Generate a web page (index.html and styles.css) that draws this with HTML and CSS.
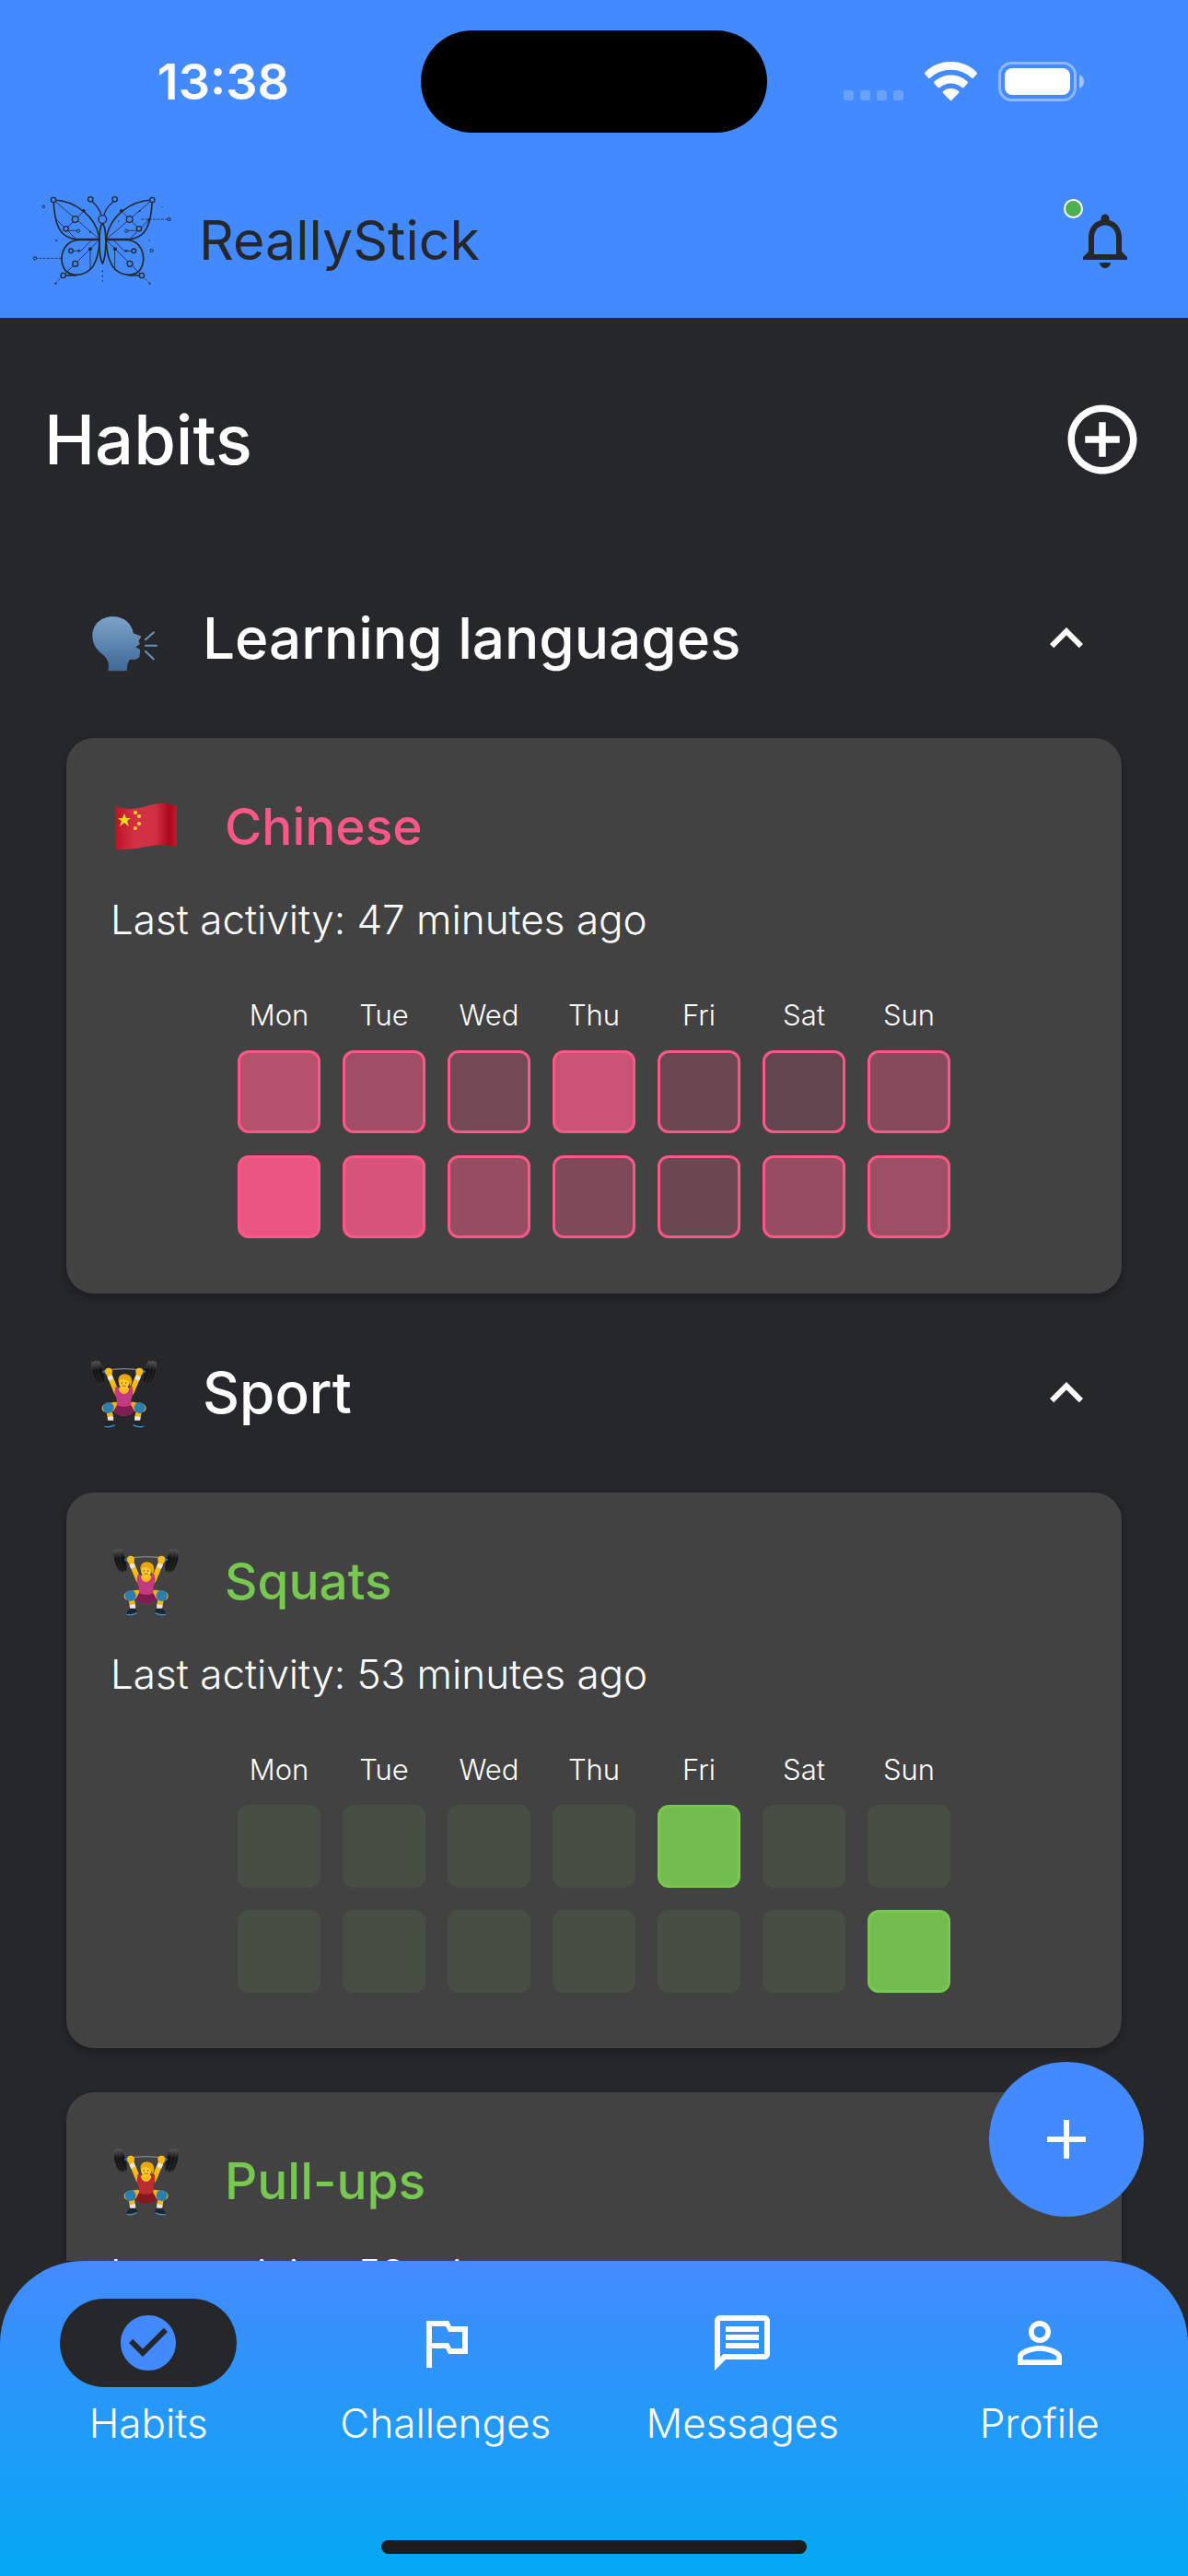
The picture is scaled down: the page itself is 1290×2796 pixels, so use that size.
FILE: index.html
```html
<!DOCTYPE html>
<html lang="en">
<head>
<meta charset="utf-8">
<meta name="viewport" content="width=device-width">
<title>ReallyStick</title>
<link rel="stylesheet" href="styles.css">
</head>
<body>
<svg class="sprite" aria-hidden="true">
  <defs>
    <linearGradient id="head-fill" x1="0" y1="0" x2="0" y2="1"><stop offset="0" stop-color="#7ba3c9"/><stop offset="1" stop-color="#3f6897"/></linearGradient>
    <linearGradient id="flag-fill" x1="0" y1="0" x2="1" y2="0"><stop offset="0" stop-color="#bd1226"/><stop offset=".3" stop-color="#d23143"/><stop offset=".65" stop-color="#d23143"/><stop offset=".88" stop-color="#a9091b"/><stop offset="1" stop-color="#c01a2d"/></linearGradient>
    <linearGradient id="plate-fill" x1="0" y1="0" x2="0" y2="1"><stop offset="0" stop-color="#5c5c5c"/><stop offset=".4" stop-color="#121212"/><stop offset="1" stop-color="#1c1c1c"/></linearGradient>
    <linearGradient id="skin-fill" gradientUnits="userSpaceOnUse" x1="0" y1="60" x2="0" y2="140"><stop offset="0" stop-color="#ffd02e"/><stop offset="1" stop-color="#f5a80d"/></linearGradient>
  </defs>
  <symbol id="lifter" viewBox="36 24 216 225">
    <g stroke="#4c4c4c" stroke-width="1" fill="url(#plate-fill)">
      <ellipse cx="53" cy="68" rx="10" ry="37" transform="rotate(-14 53 68)"/>
      <ellipse cx="62" cy="68" rx="10" ry="40" transform="rotate(-14 62 68)"/>
      <ellipse cx="71" cy="67" rx="9" ry="38" transform="rotate(-14 71 67)"/>
      <ellipse cx="239" cy="68" rx="10" ry="37" transform="rotate(14 239 68)"/>
      <ellipse cx="230" cy="68" rx="10" ry="40" transform="rotate(14 230 68)"/>
      <ellipse cx="220" cy="67" rx="9" ry="38" transform="rotate(14 220 67)"/>
    </g>
    <path d="M76 67l14-5M202 62l14 5" stroke="#2f6bb5" stroke-width="8"/>
    <path d="M90 61Q146 51 204 61" fill="none" stroke="#8a8583" stroke-width="4"/>
    <path d="M96 70L121 132M196 70L171 132" stroke="url(#skin-fill)" stroke-width="17" stroke-linecap="round"/>
    <path d="M98 80l6 12M194 80l-6 12" stroke="#e4e6f2" stroke-width="16"/>
    <circle cx="96" cy="65" r="12" fill="#fbb91a"/><circle cx="196" cy="65" r="12" fill="#fbb91a"/>
    <path d="M118 125q28-22 56 0l-8 28h-40z" fill="#fbb91a"/>
    <path d="M118 178l-30 6M174 178l30 6" stroke="#f9b018" stroke-width="28" stroke-linecap="round"/>
    <path d="M97 190l6 30M195 190l-6 30" stroke="#f9b418" stroke-width="19"/>
    <circle cx="95" cy="183" r="18" fill="#2b7fae"/><circle cx="197" cy="183" r="18" fill="#2b7fae"/>
    <path d="M101 212l2 14M191 212l-2 14" stroke="#e9e9f3" stroke-width="18"/>
    <path d="M94 224h18l6 12-8 9H82q0-12 12-21zM198 224h-18l-6 12 8 9h28q0-12-12-21z" fill="#20242b"/>
    <path d="M82 244q20 4 34-5M210 244q-20 4-34-5" stroke="#3d8dc4" stroke-width="4" fill="none"/>
    <path d="M119 114h9q2 24 18 24t18-24h9q5 24-3 40l-1 20 11 20-15 12q-19 6-38 0l-15-12 11-20-1-20q-10-16-3-40z" fill="var(--suit)"/>
    <path d="M123 175q23 10 46 0l11 19-15 12q-19 6-38 0l-15-12z" fill="var(--suit-dark)"/>
    <ellipse cx="146" cy="100" rx="17" ry="23" fill="#ffc72c"/>
    <path d="M127 100q-2-26 21-27 24 1 24 25-1 12-8 17 2-22-18-25-14 0-19 10z" fill="#eaa70b"/>
    <circle cx="139" cy="102" r="2" fill="#5b3a12"/><circle cx="152" cy="102" r="2" fill="#5b3a12"/>
    <path d="M140 113q6-4 12 0" stroke="#8b4a16" stroke-width="2.500" fill="none"/>
  </symbol>
  <symbol id="chevron" viewBox="0 0 24 24"><path d="M12 8l-6 6 1.410 1.410L12 10.830l4.590 4.580L18 14z"/></symbol>
</svg>

<header class="top">
  <div class="status">
    <span class="status-time">13:38</span>
    <span class="island"></span>
    <svg class="status-icons" viewBox="0 0 261 44" aria-hidden="true">
      <g fill="#fff" opacity=".2"><rect y="31" width="11" height="11" rx="3"/><rect x="18" y="31" width="11" height="11" rx="3"/><rect x="36" y="31" width="11" height="11" rx="3"/><rect x="54" y="31" width="11" height="11" rx="3"/></g>
      <path fill="#fff" d="M116.500 0c11 0 21 4 28 11.500q1 1 0 2l-3.500 4q-1 1-2 0a33 33 0 0 0-45 0q-1 1-2 0l-3.500-4q-1-1 0-2A40 40 0 0 1 116.500 0zM116.500 14.500c7 0 13 2.500 18 7q1 1 0 2l-4 4.500q-1 .5-2 0a18 18 0 0 0-24 0q-1 .5-2 0l-4-4.500q-1-1 0-2 8-7 18-7zM116.500 29q5 0 8.500 3 .8 1 0 2l-8.500 8.500-8.500-8.500q-.8-1 0-2 3.500-3 8.500-3z"/>
      <rect x="169.500" y="1.500" width="82" height="40" rx="13" fill="none" stroke="#fff" stroke-opacity=".4" stroke-width="3"/>
      <rect x="175" y="7" width="71" height="29" rx="8" fill="#fff"/>
      <path d="M256 14q5 2 5 7.500t-5 7.500z" fill="#fff" opacity=".5"/>
    </svg>
  </div>
  <div class="appbar">
    <svg class="logo" viewBox="0 12 540 375" aria-hidden="true">
      <g fill="none" stroke="#26272b" stroke-width="5" stroke-linejoin="round">
        <path d="M114 66C185 68 255 120 264 194H188C135 188 118 150 114 66z"/>
        <path d="M436 66C365 68 295 120 286 194H362C415 188 432 150 436 66z"/>
        <path d="M264 196H195C150 200 140 240 141 262C144 292 158 310 190 310C235 308 262 272 264 196z"/>
        <path d="M286 196H355C400 200 408 240 407 262C404 292 390 310 358 310C313 308 288 272 286 196z"/>
        <path d="M274 142C259 158 261 250 274 273C287 250 289 158 274 142z"/>
        <path d="M269 115C266 95 252 82 239 70M279 115C282 95 298 82 310 70" stroke-width="4"/>
        <path d="M146 312h44M402 312h-44" stroke-width="4"/>
      </g>
      <g fill="none" stroke="#26272b" stroke-width="2.500">
        <path d="M114 66L264 194M436 66L286 194M155 160L213 102M393 160L335 102M122 128L188 194M428 128L362 194M155 166h40M393 166h-40"/>
        <path d="M264 196L146 312M286 196L402 312M240 196L203 232H172M308 196L345 232H376M234 226V290M314 226V290M155 296L175 310M395 296L375 310"/>
        <path d="M54 256H140M400 129H491M120 338L146 312M428 338L402 312" stroke-dasharray="9 4"/>
        <path d="M274 298v48" stroke-width="5" stroke-linecap="round" stroke-dasharray="0 16"/>
      </g>
      <g fill="#448aff" stroke="#26272b" stroke-width="4">
        <circle cx="114" cy="66" r="8"/><circle cx="436" cy="66" r="8"/><circle cx="235" cy="64" r="8"/><circle cx="314" cy="64" r="8"/>
        <circle cx="274" cy="129" r="13"/><circle cx="185" cy="129" r="10"/><circle cx="362" cy="129" r="10"/>
        <circle cx="155" cy="160" r="8"/><circle cx="393" cy="160" r="8"/><circle cx="171" cy="232" r="7"/><circle cx="376" cy="232" r="7"/>
        <circle cx="185" cy="274" r="9"/><circle cx="363" cy="274" r="9"/><circle cx="146" cy="312" r="8"/><circle cx="402" cy="312" r="8"/>
        <g stroke-width="3"><circle cx="195" cy="167" r="5"/><circle cx="352" cy="167" r="5"/><circle cx="54" cy="256" r="5"/><circle cx="491" cy="129" r="5"/><circle cx="434" cy="231" r="5"/><circle cx="82" cy="88" r="4"/></g>
      </g>
      <g fill="#26272b"><circle cx="213" cy="101" r="5"/><circle cx="335" cy="101" r="5"/><circle cx="234" cy="226" r="6"/><circle cx="315" cy="226" r="6"/><circle cx="197" cy="232" r="4"/><circle cx="351" cy="232" r="4"/><circle cx="234" cy="170" r="3"/><circle cx="395" cy="102" r="3"/><circle cx="425" cy="131" r="4"/><circle cx="124" cy="198" r="3"/><circle cx="427" cy="198" r="2"/><circle cx="468" cy="88" r="2"/><circle cx="326" cy="135" r="2"/><circle cx="82" cy="112" r="1"/><circle cx="121" cy="338" r="3"/><circle cx="428" cy="338" r="3"/></g>
    </svg>
    <span class="brand">ReallyStick</span>
    <button class="bell" aria-label="Notifications">
      <svg class="icon" viewBox="0 0 24 24"><path d="M12 22c1.100 0 2-.9 2-2h-4c0 1.100.89 2 2 2zm6-6v-5c0-3.070-1.640-5.640-4.500-6.320V4c0-.83-.67-1.500-1.500-1.500s-1.500.67-1.500 1.500v.68C7.630 5.360 6 7.920 6 11v5l-2 2v1h16v-1l-2-2zm-2 1H8v-6c0-2.480 1.510-4.500 4-4.500s4 2.020 4 4.500v6z"/></svg>
      <span class="bell-dot"></span>
    </button>
  </div>
</header>

<main class="content">
  <div class="list">
    <div class="page-head">
      <h1 class="page-title">Habits</h1>
      <button class="plain" aria-label="Add habit"><svg class="icon-large" viewBox="0 0 24 24"><path d="M13 7h-2v4H7v2h4v4h2v-4h4v-2h-4V7zm-1-5C6.480 2 2 6.480 2 12s4.480 10 10 10 10-4.480 10-10S17.520 2 12 2zm0 18c-4.410 0-8-3.590-8-8s3.590-8 8-8 8 3.590 8 8-3.590 8-8 8z"/></svg></button>
    </div>

    <section>
      <h2 class="group"><button class="group-toggle" aria-expanded="true">
        <svg class="emoji" viewBox="17 8 228 213" aria-hidden="true">
          <path d="M81 219q8-30-14-51C42 150 30 130 30 104 31 65 60 42 97 42c37 0 63 24 66 54l27 10-10 15 5 10-14 10 15 9-3 24q-8 10-30 7-10 10-11 38z" fill="url(#head-fill)"/>
          <path d="M203 117l27-24M203 136h36M203 155l26 25" stroke="#6595bf" stroke-width="6" stroke-linecap="round"/>
        </svg>
        <span class="group-name">Learning languages</span>
        <svg class="icon" aria-hidden="true"><use href="#chevron"/></svg>
      </button></h2>
      <article class="card pink">
        <h3 class="habit"><svg class="emoji" viewBox="0 0 76 75" aria-hidden="true">
          <path d="M5 15q16 6 34 0t33 0v44q-16-4-33 0t-34 3z" fill="url(#flag-fill)"/>
          <g fill="#f3dc19"><path d="M15 23l2 5h5l-4 3 2 6-5-4-5 4 2-6-4-3h5z"/><circle cx="27" cy="22" r="2"/><circle cx="31" cy="26" r="2"/><circle cx="31" cy="34" r="2"/><circle cx="27" cy="39" r="2"/></g>
        </svg>Chinese</h3>
        <p class="activity">Last activity: 47 minutes ago</p>
        <table class="weeks">
          <thead><tr><th>Mon</th><th>Tue</th><th>Wed</th><th>Thu</th><th>Fri</th><th>Sat</th><th>Sun</th></tr></thead>
          <tbody>
            <tr><td style="--level:62%"></td><td style="--level:51%"></td><td style="--level:27%"></td><td style="--level:73%"></td><td style="--level:22%"></td><td style="--level:18%"></td><td style="--level:36%"></td></tr>
            <tr><td style="--level:91%"></td><td style="--level:80%"></td><td style="--level:46%"></td><td style="--level:33%"></td><td style="--level:22%"></td><td style="--level:46%"></td><td style="--level:49%"></td></tr>
          </tbody>
        </table>
      </article>
    </section>

    <section>
      <h2 class="group"><button class="group-toggle" aria-expanded="true">
        <svg class="emoji" aria-hidden="true"><use href="#lifter"/></svg>
        <span class="group-name">Sport</span>
        <svg class="icon" aria-hidden="true"><use href="#chevron"/></svg>
      </button></h2>
      <article class="card green">
        <h3 class="habit"><svg class="emoji" aria-hidden="true"><use href="#lifter"/></svg>Squats</h3>
        <p class="activity">Last activity: 53 minutes ago</p>
        <table class="weeks">
          <thead><tr><th>Mon</th><th>Tue</th><th>Wed</th><th>Thu</th><th>Fri</th><th>Sat</th><th>Sun</th></tr></thead>
          <tbody>
            <tr><td class="none"></td><td class="none"></td><td class="none"></td><td class="none"></td><td style="--level:92%"></td><td class="none"></td><td class="none"></td></tr>
            <tr><td class="none"></td><td class="none"></td><td class="none"></td><td class="none"></td><td class="none"></td><td class="none"></td><td style="--level:92%"></td></tr>
          </tbody>
        </table>
      </article>
      <article class="card green">
        <h3 class="habit"><svg class="emoji red-suit" aria-hidden="true"><use href="#lifter"/></svg>Pull-ups</h3>
        <p class="activity">Last activity: 53 minutes ago</p>
      </article>
    </section>
  </div>
  <button class="fab" aria-label="Add activity"><svg class="icon" viewBox="0 0 24 24"><path d="M19 13h-6v6h-2v-6H5v-2h6V5h2v6h6z"/></svg></button>
</main>

<nav class="tabs">
  <div class="tab-row">
    <a class="tab active" href="#habits"><span class="tab-pill"><svg class="icon" viewBox="0 0 24 24"><path d="M12 2C6.480 2 2 6.480 2 12s4.480 10 10 10 10-4.480 10-10S17.520 2 12 2zm-2 15l-5-5 1.410-1.410L10 14.170l7.590-7.590L19 8l-9 9z"/></svg></span>Habits</a>
    <a class="tab" href="#challenges"><span class="tab-pill"><svg class="icon" viewBox="0 0 24 24"><path d="M14 6l-1-2H5v17h2v-7h5l1 2h7V6h-6zm4 8h-4l-1-2H7V6h5l1 2h5v6z"/></svg></span>Challenges</a>
    <a class="tab" href="#messages"><span class="tab-pill"><svg class="icon" viewBox="0 0 24 24"><path d="M4 4h16v12H5.170L4 17.170V4m0-2c-1.100 0-1.990.9-1.990 2L2 22l4-4h14c1.100 0 2-.9 2-2V4c0-1.100-.9-2-2-2H4zm2 10h12v2H6v-2zm0-3h12v2H6V9zm0-3h12v2H6V6z"/></svg></span>Messages</a>
    <a class="tab" href="#profile"><span class="tab-pill"><svg class="icon" viewBox="0 0 24 24"><path d="M12 5.900c1.160 0 2.100.94 2.100 2.100s-.94 2.100-2.100 2.100S9.900 9.160 9.900 8s.94-2.100 2.100-2.100m0 9c2.970 0 6.100 1.460 6.100 2.100v1.100H5.900V17c0-.64 3.130-2.100 6.100-2.100M12 4C9.790 4 8 5.790 8 8s1.790 4 4 4 4-1.790 4-4-1.790-4-4-4zm0 9c-2.670 0-8 1.340-8 4v3h16v-3c0-2.660-5.330-4-8-4z"/></svg></span>Profile</a>
  </div>
  <div class="home-bar"></div>
</nav>
</body>
</html>
```
FILE: styles.css
```css
* { box-sizing: border-box; }

body {
  margin: 0;
  height: 100vh;
  display: flex;
  flex-direction: column;
  background: #26272b;
  color: #fff;
  font-family: Inter, "Open Sans", sans-serif;
}

button { border: 0; padding: 0; background: none; color: inherit; font: inherit; }
h1, h2, h3, p { margin: 0; font-weight: 500; }
svg { flex: none; display: block; }
.sprite { position: absolute; width: 0; height: 0; }

.icon { width: 72px; height: 72px; fill: currentColor; }
.icon-large { width: 90px; height: 90px; fill: currentColor; }
.emoji { width: 76px; height: 75px; --suit: #c23a80; --suit-dark: #7f1c52; }
.red-suit { --suit: #b92c30; --suit-dark: #85181c; }

/* Status bar and app bar */
.top { flex: none; background: #448aff; }

.status {
  display: grid;
  grid-template-columns: 1fr 376px 1fr;
  align-items: center;
  justify-items: center;
  height: 177px;
}
.status-time { padding-left: 28px; font-size: 54px; font-weight: 600; line-height: 64px; }
.island { width: 100%; height: 111px; border-radius: 56px; background: #000; }
.status-icons { width: 261px; height: 44px; margin-right: 30px; }

.appbar {
  display: flex;
  align-items: center;
  height: 168px;
  padding: 0 54px 0 20px;
  color: #26272b;
}
.logo { width: 180px; height: 125px; }
.brand { flex: 1; padding-left: 16px; font-size: 59px; line-height: 72px; }
.bell { position: relative; }
.bell-dot {
  position: absolute;
  top: -9px;
  left: -9px;
  width: 21px;
  height: 21px;
  border: 2px solid #fff;
  border-radius: 50%;
  background: #4caf50;
}

/* Habit list */
.content { position: relative; flex: 1; min-height: 0; }
.list { height: 100%; overflow: hidden; }

.page-head {
  display: flex;
  align-items: center;
  justify-content: space-between;
  height: 240px;
  padding: 24px 48px 0;
}
.page-title { font-size: 74px; line-height: 88px; }

.group-toggle {
  display: flex;
  align-items: center;
  gap: 48px;
  width: 100%;
  height: 216px;
  padding: 0 96px;
  text-align: left;
}
.group-name { flex: 1; font-size: 62px; line-height: 72px; }

.card {
  margin: 0 72px 48px;
  padding: 48px 48px 36px;
  border-radius: 30px;
  background: #424242;
  box-shadow: 0 4px 8px rgba(0, 0, 0, .3);
}
section .card:last-child { margin-bottom: 0; }
.pink { --tint: #fb5888; }
.green { --tint: #77c850; }

.habit {
  display: flex;
  align-items: center;
  gap: 48px;
  height: 96px;
  color: var(--tint);
  font-size: 55px;
}
.activity { margin-top: 26px; font-size: 44px; font-weight: 300; line-height: 55px; }

.weeks { margin: 38px auto 0; border-spacing: 24px; table-layout: fixed; }
.weeks th {
  width: 90px;
  padding: 0;
  font-size: 31px;
  font-weight: 300;
  line-height: 28px;
}
.weeks td {
  height: 90px;
  padding: 0;
  border: 3px solid var(--tint);
  border-radius: 12px;
  background: color-mix(in srgb, var(--tint) var(--level), #424242);
}
.weeks .none { --level: 9%; border-color: transparent; }

.fab {
  position: absolute;
  right: 48px;
  bottom: 48px;
  display: grid;
  place-items: center;
  width: 168px;
  height: 168px;
  border-radius: 50%;
  background: #448aff;
}

/* Bottom navigation */
.tabs {
  flex: none;
  padding: 41px 0 24px;
  border-radius: 90px 90px 0 0;
  background: linear-gradient(#448aff, #03a9f4);
}
.tab-row { display: grid; grid-template-columns: repeat(4, 1fr); }
.tab {
  display: flex;
  flex-direction: column;
  align-items: center;
  gap: 12px;
  color: #fff;
  font-size: 44px;
  font-weight: 300;
  line-height: 54px;
  text-decoration: none;
}
.tab-pill {
  display: grid;
  place-items: center;
  width: 192px;
  height: 96px;
  border-radius: 48px;
}
.active .tab-pill { background: #26272b; color: #448aff; }
.home-bar {
  width: 462px;
  height: 15px;
  margin: 100px auto 0;
  border-radius: 8px;
  background: #1c1c1c;
}
```
